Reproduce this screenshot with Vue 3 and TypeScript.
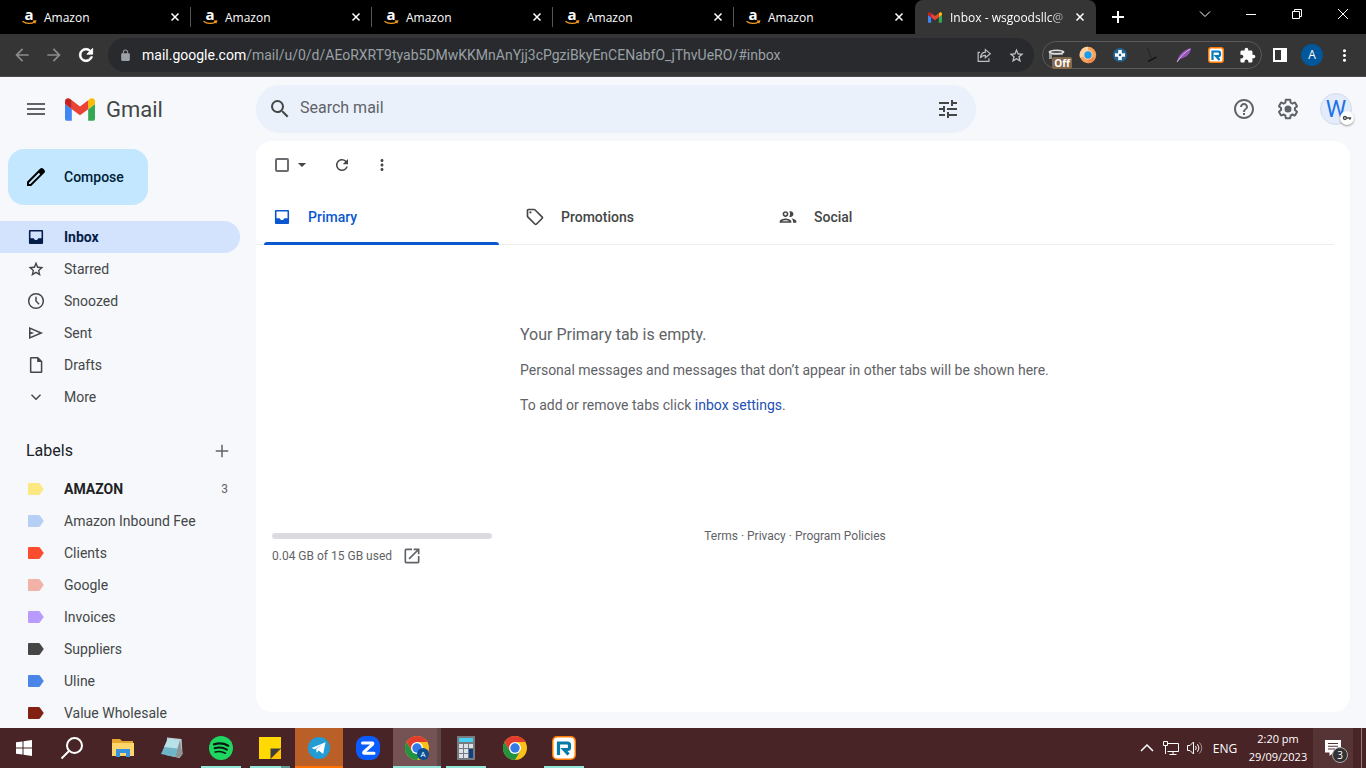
<script setup lang="ts">
import { ref } from 'vue'

interface NavItem { name: string; icon: string }
interface Label { name: string; color: string; count?: number }

const icons: Record<string, string> = {
  menu: 'M3 18h18v-2H3v2zm0-5h18v-2H3v2zm0-7v2h18V6H3z',
  search: 'M15.5 14h-.79l-.28-.27A6.471 6.471 0 0 0 16 9.5 6.5 6.5 0 1 0 9.5 16c1.61 0 3.09-.59 4.23-1.57l.27.28v.79l5 4.99L20.49 19l-4.99-5zm-6 0C7.01 14 5 11.99 5 9.5S7.01 5 9.5 5 14 7.01 14 9.5 11.99 14 9.5 14z',
  tune: 'M3 17v2h6v-2H3zM3 5v2h10V5H3zm10 16v-2h8v-2h-8v-2h-2v6h2zM7 9v2H3v2h4v2h2V9H7zm14 4v-2H11v2h10zm-6-4h2V7h4V5h-4V3h-2v6z',
  help: 'M11 18h2v-2h-2v2zm1-16C6.48 2 2 6.48 2 12s4.48 10 10 10 10-4.48 10-10S17.52 2 12 2zm0 18c-4.41 0-8-3.59-8-8s3.59-8 8-8 8 3.59 8 8-3.59 8-8 8zm0-14c-2.21 0-4 1.79-4 4h2c0-1.1.9-2 2-2s2 .9 2 2c0 2-3 1.75-3 5h2c0-2.25 3-2.5 3-5 0-2.21-1.79-4-4-4z',
  settings: 'M13.85 22.25h-3.7c-.74 0-1.36-.54-1.45-1.27l-.27-1.89c-.27-.14-.53-.29-.79-.46l-1.8.72c-.7.26-1.47-.03-1.81-.65L2.2 15.53c-.35-.66-.2-1.44.36-1.88l1.53-1.19c-.01-.15-.02-.3-.02-.46 0-.15.01-.31.02-.46l-1.52-1.19c-.59-.45-.74-1.26-.37-1.88l1.85-3.19c.34-.62 1.11-.9 1.79-.63l1.81.73c.26-.17.52-.32.78-.46l.27-1.91c.09-.7.71-1.25 1.44-1.25h3.7c.74 0 1.36.54 1.45 1.27l.27 1.89c.27.14.53.29.79.46l1.8-.72c.71-.26 1.48.03 1.82.65l1.84 3.18c.36.66.2 1.44-.36 1.88l-1.52 1.19c.01.15.02.3.02.46s-.01.31-.02.46l1.52 1.19c.56.45.72 1.23.37 1.86l-1.86 3.22c-.34.62-1.11.9-1.8.63l-1.8-.72c-.26.17-.52.32-.78.46l-.27 1.91c-.1.68-.72 1.22-1.46 1.22zm-3.23-2h2.76l.37-2.55.53-.22c.44-.18.88-.44 1.34-.78l.45-.34 2.38.96 1.38-2.4-2.03-1.58.07-.56c.03-.26.06-.51.06-.78s-.03-.53-.06-.78l-.07-.56 2.03-1.58-1.39-2.4-2.39.96-.45-.35c-.42-.32-.87-.58-1.33-.77l-.52-.22-.37-2.55h-2.76l-.37 2.55-.53.21c-.44.19-.88.44-1.34.79l-.45.33-2.38-.95-1.39 2.39 2.03 1.58-.07.56a7 7 0 0 0-.06.79c0 .26.02.53.06.78l.07.56-2.03 1.58 1.38 2.4 2.39-.96.45.35c.43.33.86.58 1.33.77l.53.22.38 2.55zM12 8.5a3.5 3.5 0 1 0 0 7 3.5 3.5 0 0 0 0-7z',
  pencil: 'M20.41 4.94l-1.35-1.35c-.78-.78-2.05-.78-2.83 0L3 16.82V21h4.18L20.41 7.77c.79-.78.79-2.05 0-2.83zm-14 14.12L5 19v-1.36l9.82-9.82 1.41 1.41-9.82 9.83z',
  inbox: 'M5 3.6h14c.9 0 1.5.6 1.5 1.5v13.9c0 .9-.6 1.5-1.5 1.5H5c-.9 0-1.5-.6-1.5-1.5V5.1c0-.9.6-1.5 1.5-1.5zM5.4 5.5v8h3.9c.3 1.400 1.300 2.100 2.700 2.100s2.400-.7 2.700-2.100h3.900v-8z',
  star: 'M21 9.7l-6.5-.6L12 3.1 9.5 9.1 3 9.7l4.9 4.3-1.5 6.4L12 17l5.6 3.4-1.5-6.4L21 9.7zM12 15l-3.100 1.900.8-3.500-2.700-2.400 3.600-.3L12 7.400l1.400 3.300 3.600.3-2.700 2.400.8 3.500z',
  clock: 'M12 2.3a9.7 9.7 0 1 0 0 19.4 9.7 9.7 0 0 0 0-19.4zm0 17.6a7.900 7.900 0 1 1 0-15.800 7.900 7.900 0 0 1 0 15.800zM12.9 6.8h-1.8v5.6l4 4 1.2-1.2-3.4-3.5z',
  send: 'M3.6 4.8v14.4L20.6 12 3.6 4.8zm1.8 2.7L15.9 12 5.4 16.500V13.400L10 12l-4.600-1.400V7.500z',
  draft: 'M6.400 2.400h8.100l5.100 5.100v12.500c0 1-.7 1.700-1.700 1.700H6.400c-1 0-1.700-.7-1.700-1.700V4.100c0-1 .7-1.700 1.700-1.700zm.1 1.800v15.700h11.300V8.400h-4.400V4.200z',
  more: 'M7.200 8.700L12 13.500l4.800-4.800 1.200 1.200-6 6-6-6z',
  plus: 'M19.500 11.100h-6.600V4.500h-1.800v6.600H4.500v1.800h6.600v6.600h1.800v-6.600h6.600z',
  label: 'M4 4.800h11.200c.7 0 1.200.3 1.600.8l4.500 6.400-4.500 6.400c-.4.500-.9.800-1.600.8H4c-1 0-1.600-.6-1.600-1.600V6.400c0-1 .6-1.600 1.600-1.600z',
  tag: 'M21.41 11.41l-8.83-8.83c-.37-.37-.88-.58-1.41-.58H4c-1.100 0-2 .9-2 2v7.170c0 .53.21 1.040.59 1.410l8.830 8.830c.78.78 2.050.78 2.830 0l7.170-7.170c.78-.78.78-2.040-.01-2.830zM12.830 20L4 11.170V4h7.170L20 12.830 12.830 20zM6.500 5.200a1.300 1.300 0 1 0 0 2.600 1.300 1.300 0 0 0 0-2.600z',
  people: 'M9 13.75c-2.34 0-7 1.17-7 3.5V19h14v-1.75c0-2.33-4.66-3.5-7-3.5zM4.34 17c.84-.58 2.87-1.25 4.66-1.25s3.82.67 4.66 1.25H4.34zM9 12c1.93 0 3.5-1.57 3.5-3.5S10.93 5 9 5 5.5 6.57 5.5 8.5 7.07 12 9 12zm0-5c.83 0 1.5.67 1.5 1.5S9.83 10 9 10s-1.5-.67-1.5-1.5S8.17 7 9 7zm7.04 6.81c1.16.84 1.96 1.96 1.96 3.44V19h4v-1.75c0-2.02-3.5-3.17-5.96-3.44zM15 12c1.93 0 3.5-1.57 3.5-3.5S16.93 5 15 5c-.54 0-1.04.13-1.5.35.63.89 1 1.98 1 3.15s-.37 2.26-1 3.15c.46.22.96.35 1.5.35z',
  refresh: 'M17.65 6.35A7.958 7.958 0 0 0 12 4c-4.42 0-7.99 3.58-7.99 8s3.57 8 7.99 8c3.73 0 6.84-2.55 7.73-6h-2.08A5.99 5.99 0 0 1 12 18c-3.31 0-6-2.69-6-6s2.69-6 6-6c1.66 0 3.14.69 4.22 1.78L13 11h7V4l-2.35 2.35z',
  dots: 'M12 8c1.1 0 2-.9 2-2s-.9-2-2-2-2 .9-2 2 .9 2 2 2zm0 2c-1.1 0-2 .9-2 2s.9 2 2 2 2-.9 2-2-.9-2-2-2zm0 6c-1.1 0-2 .9-2 2s.9 2 2 2 2-.9 2-2-.9-2-2-2z',
  caret: 'M7 9.500l5 5 5-5z',
  back: 'M20 11H7.83l5.59-5.59L12 4l-8 8 8 8 1.41-1.41L7.83 13H20v-2z',
  forward: 'M4 11h12.170l-5.590-5.590L12 4l8 8-8 8-1.410-1.410L16.170 13H4v-2z',
  lock: 'M18 8h-1V6c0-2.76-2.24-5-5-5S7 3.24 7 6v2H6c-1.1 0-2 .9-2 2v10c0 1.1.9 2 2 2h12c1.1 0 2-.9 2-2V10c0-1.1-.9-2-2-2zM15.1 8H8.9V6a3.1 3.1 0 0 1 6.2 0v2z',
  puzzle: 'M20.5 11H19V7c0-1.1-.9-2-2-2h-4V3.5C13 2.12 11.88 1 10.5 1S8 2.12 8 3.5V5H4c-1.1 0-1.99.9-1.99 2v3.8H3.5c1.49 0 2.7 1.21 2.7 2.7s-1.21 2.7-2.7 2.7H2V20c0 1.1.9 2 2 2h3.8v-1.5c0-1.49 1.21-2.7 2.7-2.7 1.49 0 2.7 1.21 2.7 2.7V22H17c1.1 0 2-.9 2-2v-4h1.5c1.38 0 2.5-1.12 2.5-2.5S21.88 11 20.5 11z',
  launch: 'M19 19H5V5h7V3H5a2 2 0 0 0-2 2v14a2 2 0 0 0 2 2h14c1.1 0 2-.9 2-2v-7h-2v7zM14 3v2h3.59l-9.83 9.83 1.41 1.41L19 6.41V10h2V3h-7z',
}

const folders: NavItem[] = [
  { name: 'Inbox', icon: 'inbox' },
  { name: 'Starred', icon: 'star' },
  { name: 'Snoozed', icon: 'clock' },
  { name: 'Sent', icon: 'send' },
  { name: 'Drafts', icon: 'draft' },
  { name: 'More', icon: 'more' },
]

const labels: Label[] = [
  { name: 'AMAZON', color: '#fce883', count: 3 },
  { name: 'Amazon Inbound Fee', color: '#b6cff5' },
  { name: 'Clients', color: '#fb4c2f' },
  { name: 'Google', color: '#f2b2a8' },
  { name: 'Invoices', color: '#b99aff' },
  { name: 'Suppliers', color: '#464646' },
  { name: 'Uline', color: '#4986e7' },
  { name: 'Value Wholesale', color: '#822111' },
]

const categories: NavItem[] = [
  { name: 'Primary', icon: 'inbox' },
  { name: 'Promotions', icon: 'tag' },
  { name: 'Social', icon: 'people' },
]

const apps = [
  { id: 'explorer', title: 'File Explorer', state: '' },
  { id: 'notepad', title: 'Notepad', state: '' },
  { id: 'spotify', title: 'Spotify', state: 'open' },
  { id: 'sticky', title: 'Sticky Notes', state: 'open stacked' },
  { id: 'telegram', title: 'Telegram', state: 'alert' },
  { id: 'zoom', title: 'Zoom', state: '' },
  { id: 'chromeA', title: 'Google Chrome', state: 'current' },
  { id: 'calc', title: 'Calculator', state: 'open' },
  { id: 'chrome', title: 'Google Chrome', state: '' },
  { id: 'ring', title: 'RingCentral', state: 'open' },
]

const folder = ref('Inbox')
const category = ref('Primary')
const query = ref('')
</script>

<template>
  <div class="screen">
    <header class="browser">
      <div class="strip">
        <div v-for="n in 5" :key="n" class="tab">
          <svg class="favicon" viewBox="0 0 16 16" aria-hidden="true">
            <text x="8" y="11" text-anchor="middle" font-family="Open Sans" font-weight="700" font-size="15" fill="#fff">a</text>
            <path d="M1.500 12.300c3.600 2.700 8.800 2.800 12.200.7M12 12.200l2.600-.2-.8 2.300" fill="none" stroke="#f39a1e" stroke-width="1.300" />
          </svg>
          <span class="tab-title">Amazon</span>
          <button class="close" aria-label="Close tab"><svg viewBox="0 0 8 8"><path d="M.5.5l7 7m0-7l-7 7" /></svg></button>
        </div>
        <div class="tab active">
          <svg class="favicon gm" viewBox="52 42 88 66" aria-hidden="true">
            <path fill="#4285f4" d="M58 108h14V74L52 59v43c0 3.320 2.690 6 6 6" /><path fill="#34a853" d="M120 108h14c3.320 0 6-2.690 6-6V59l-20 15" /><path fill="#fbbc04" d="M120 48v26l20-15v-8c0-7.420-8.470-11.650-14.400-7.200" /><path fill="#ea4335" d="M72 74V48l24 18 24-18v26L96 92" /><path fill="#c5221f" d="M52 51v8l20 15V48l-5.600-4.200c-5.940-4.450-14.400-.22-14.400 7.200" />
          </svg>
          <span class="tab-title fade">Inbox - wsgoodsllc@</span>
          <button class="close" aria-label="Close tab"><svg viewBox="0 0 8 8"><path d="M.5.5l7 7m0-7l-7 7" /></svg></button>
        </div>
        <button class="new-tab" aria-label="New tab"><svg viewBox="0 0 12 12"><path d="M6 0v12M0 6h12" /></svg></button>
        <div class="window-buttons">
          <button aria-label="Search tabs"><svg viewBox="0 0 12 12"><path d="M1 3.500l5 5 5-5" /></svg></button>
          <button aria-label="Minimize"><svg viewBox="0 0 12 12"><path d="M1 6.500h10" /></svg></button>
          <button aria-label="Restore"><svg viewBox="0 0 12 12"><path d="M1.500 3.500h7v7h-7zM3.500 3.500v-2h7v7h-2" /></svg></button>
          <button aria-label="Close"><svg viewBox="0 0 12 12"><path d="M1 1l10 10M11 1L1 11" /></svg></button>
        </div>
      </div>
      <div class="toolbar">
        <button class="tool dim" aria-label="Back"><svg viewBox="0 0 24 24"><path :d="icons.back" /></svg></button>
        <button class="tool dim" aria-label="Forward"><svg viewBox="0 0 24 24"><path :d="icons.forward" /></svg></button>
        <button class="tool" aria-label="Reload"><svg viewBox="0 0 24 24"><path :d="icons.refresh" stroke="#fff" /></svg></button>
        <div class="omnibox">
          <svg class="lock" viewBox="0 0 24 24" aria-hidden="true"><path :d="icons.lock" /></svg>
          <div class="url" role="textbox" aria-label="Address" tabindex="0"><span>mail.google.com</span>/mail/u/0/d/AEoRXRT9tyab5DMwKKMnAnYjj3cPgziBkyEnCENabfO_jThvUeRO/#inbox</div>
          <button class="tool omni" aria-label="Share"><svg class="line" viewBox="0 0 20 20"><path d="M5.500 7H3.500v10h12v-3.500M11.500 4l5.500 4.500-5.500 4.500v-2.600c-2.600 0-4.300.8-5.500 2.800.3-3.400 2-6 5.500-6.400z" /></svg></button>
          <button class="tool omni" aria-label="Bookmark"><svg class="big" viewBox="0 0 24 24"><path fill-rule="evenodd" :d="icons.star" /></svg></button>
        </div>
        <div class="extensions">
          <button class="tool" aria-label="Extension, off">
            <svg class="ext" viewBox="0 0 20 20"><path d="M2 6v8h3v-4h11V6z" fill="#9b9b9b" /><ellipse cx="9.500" cy="7" rx="8" ry="2.600" fill="#ddd" /><ellipse cx="9.500" cy="7" rx="5.500" ry="1" fill="#555" /></svg>
            <span class="off">Off</span>
          </button>
          <button class="tool" aria-label="Orange ring extension"><svg class="ext" viewBox="0 0 20 20"><circle cx="10" cy="10" r="8.200" fill="#f7a35c" /><path d="M10 1.800a8.200 8.200 0 0 0-8 11l4-1.300a4.500 4.500 0 0 1 4-6z" fill="#ffd0a0" /><path d="M10 18.200a8.200 8.200 0 0 0 7.500-5l-4-1.500-4 3z" fill="#f08a4a" /><circle cx="10" cy="10" r="4.700" fill="#fbd9b8" /><circle cx="10" cy="10" r="3.700" fill="#1c9be6" /></svg></button>
          <button class="tool" aria-label="Blue cross extension"><svg class="ext" viewBox="0 0 20 20"><circle cx="10" cy="10" r="7" fill="#226593" /><path d="M8.200 5h3.600v3.200H15v3.600h-3.200V15H8.200v-3.200H5V8.200h3.200z" fill="#fff" /><circle cx="10" cy="10" r="1.300" fill="#226593" /></svg></button>
          <button class="tool" aria-label="Clock extension"><svg class="ext" viewBox="0 0 20 20"><path d="M5.500 3l4 10.500" fill="none" stroke="#242424" /><path d="M6 16.500l8.500-4.500" fill="none" stroke="#0c0c0c" stroke-width="1.400" /></svg></button>
          <button class="tool" aria-label="Feather extension"><svg class="ext" viewBox="0 0 20 20"><path d="M3 17C4 10 9 5 17 3c0 5-4 9.500-11 11z" fill="#9253b5" /><path d="M3 17C7 11 11 7 16 4" fill="none" stroke="#dfbce9" /></svg></button>
          <button class="tool" aria-label="RingCentral extension"><svg class="ext" viewBox="0 0 20 20"><rect x="2" y="2" width="16" height="16" rx="3" fill="#ff7a00" /><rect x="3.500" y="3.500" width="13" height="13" rx="1.500" fill="#fff" /><path d="M6.500 15V6.500h6q1.500 0 1.500 1.500v1.500q0 1.500-1.500 1.500H10l3.500 4" fill="none" stroke="#067ab8" stroke-width="2.200" /></svg></button>
          <button class="tool" aria-label="Extensions"><svg class="puzzle" viewBox="0 0 24 24"><path :d="icons.puzzle" /></svg></button>
        </div>
        <div class="chrome-end">
          <button class="tool" aria-label="Side panel"><svg class="panel-icon" viewBox="0 0 14 14"><path fill-rule="evenodd" d="M0 0h14v14H0zM2 2v10h6V2z" /></svg></button>
          <button class="tool" aria-label="Profile"><span class="profile">A</span></button>
          <button class="tool" aria-label="Menu"><svg class="kebab" viewBox="0 0 24 24"><path :d="icons.dots" /></svg></button>
        </div>
      </div>
    </header>

    <div class="mail">
      <header class="mail-head">
        <div class="brand">
          <button class="plain" aria-label="Main menu"><svg class="i24" viewBox="0 0 24 24"><path :d="icons.menu" /></svg></button>
          <a class="logo" href="#inbox">
            <svg viewBox="52 42 88 66" aria-hidden="true">
              <path fill="#4285f4" d="M58 108h14V74L52 59v43c0 3.320 2.690 6 6 6" /><path fill="#34a853" d="M120 108h14c3.320 0 6-2.690 6-6V59l-20 15" /><path fill="#fbbc04" d="M120 48v26l20-15v-8c0-7.420-8.470-11.650-14.400-7.200" /><path fill="#ea4335" d="M72 74V48l24 18 24-18v26L96 92" /><path fill="#c5221f" d="M52 51v8l20 15V48l-5.600-4.200c-5.940-4.450-14.400-.22-14.400 7.200" />
            </svg>
            <span>Gmail</span>
          </a>
        </div>
        <form class="search" role="search" @submit.prevent>
          <button class="plain dark" aria-label="Search"><svg class="i24" viewBox="0 0 24 24"><path :d="icons.search" /></svg></button>
          <input v-model="query" type="text" placeholder="Search mail" aria-label="Search mail">
          <button class="plain dark" type="button" aria-label="Search options"><svg class="i24" viewBox="0 0 24 24"><path :d="icons.tune" /></svg></button>
        </form>
        <div class="account">
          <button class="plain" aria-label="Support"><svg class="i24" viewBox="0 0 24 24"><path :d="icons.help" /></svg></button>
          <button class="plain" aria-label="Settings"><svg class="i24" viewBox="0 0 24 24"><path fill-rule="evenodd" :d="icons.settings" /></svg></button>
          <button class="avatar" aria-label="Account">W
            <span class="key"><svg viewBox="0 0 12 12"><circle cx="3.500" cy="6" r="1.800" /><path d="M5.300 6h5.700M9.500 6v2" /></svg></span>
          </button>
        </div>
      </header>

      <div class="mail-body">
        <aside class="side">
          <button class="compose"><svg class="i24" viewBox="0 0 24 24"><path :d="icons.pencil" /></svg>Compose</button>
          <nav class="list" aria-label="Folders">
            <a v-for="f in folders" :key="f.name" href="#inbox" class="row" :class="{ selected: f.name === folder }" @click.prevent="folder = f.name">
              <svg class="i20" viewBox="0 0 24 24" aria-hidden="true"><path fill-rule="evenodd" :d="icons[f.icon]" /></svg>
              <span>{{ f.name }}</span>
            </a>
          </nav>
          <div class="labels-head">
            <h2>Labels</h2>
            <button class="plain" aria-label="Create new label"><svg class="i20" viewBox="0 0 24 24"><path :d="icons.plus" /></svg></button>
          </div>
          <nav class="list" aria-label="Labels">
            <a v-for="l in labels" :key="l.name" href="#label" class="row" :class="{ unread: l.count }">
              <svg class="i20" viewBox="0 0 24 24" aria-hidden="true"><path :d="icons.label" :fill="l.color" /></svg>
              <span>{{ l.name }}</span>
              <span v-if="l.count" class="count">{{ l.count }}</span>
            </a>
          </nav>
        </aside>

        <main class="panel">
          <div class="actions">
            <input type="checkbox" aria-label="Select all">
            <button class="plain caret" aria-label="Select options"><svg class="i20" viewBox="0 0 24 24"><path :d="icons.caret" /></svg></button>
            <button class="plain" aria-label="Refresh"><svg class="i18" viewBox="0 0 24 24"><path :d="icons.refresh" /></svg></button>
            <button class="plain" aria-label="More options"><svg class="i18" viewBox="0 0 24 24"><path :d="icons.dots" /></svg></button>
          </div>
          <div class="categories" role="tablist">
            <button v-for="c in categories" :key="c.name" role="tab" class="category" :class="{ on: c.name === category }" :aria-selected="c.name === category" @click="category = c.name">
              <svg class="i20" viewBox="0 0 24 24" aria-hidden="true"><path fill-rule="evenodd" :d="icons[c.icon]" /></svg>
              {{ c.name }}
            </button>
          </div>
          <section class="empty">
            <p class="lead">Your Primary tab is empty.</p>
            <p>Personal messages and messages that don’t appear in other tabs will be shown here.</p>
            <p>To add or remove tabs click <a href="#settings">inbox settings</a>.</p>
          </section>
          <footer class="foot">
            <div class="storage">
              <div class="meter"></div>
              <div class="used">0.04 GB of 15 GB used <a href="#storage" aria-label="Manage storage"><svg class="i20" viewBox="0 0 24 24"><path :d="icons.launch" /></svg></a></div>
            </div>
            <div class="legal"><a href="#terms">Terms</a> · <a href="#privacy">Privacy</a> · <a href="#policies">Program Policies</a></div>
          </footer>
        </main>
      </div>
    </div>

    <footer class="taskbar">
      <button class="task" aria-label="Start"><svg viewBox="0 0 24 24"><path fill="#fff" d="M4 6.300l6.500-.9v6.100H4zM11.500 5.200L20 4v7.500h-8.500zM4 12.500h6.500v6.100L4 17.700zM11.500 12.500H20V20l-8.500-1.200z" /></svg></button>
      <button class="task" aria-label="Search"><svg viewBox="0 0 24 24"><g fill="none" stroke="#fff" stroke-width="2"><circle cx="14.500" cy="9.500" r="7.500" /><path d="M9 15l-7.500 7.500" /></g></svg></button>
      <div class="apps">
        <button v-for="a in apps" :key="a.id" class="task" :class="a.state" :aria-label="a.title">
          <svg v-if="a.id === 'explorer'" viewBox="0 0 24 24"><path d="M1 3h8l2 2h11v3H1z" fill="#e8a62c" /><path d="M1 7h22v13H1z" fill="#ffd66b" /><path d="M5 13h14v8h-4v-4H9v4H5z" fill="#3593df" /></svg>
          <svg v-else-if="a.id === 'notepad'" viewBox="0 0 24 24"><path d="M7 1.500l14.500 1.500 1 15-3 4L6 19z" fill="#c9d2d4" /><path d="M8 2.500L20 4l-5 17L1 18z" fill="#6fb5c8" /><path d="M8 2.500L20 4l-2.500 8.500L4 11z" fill="#b9e1e8" /><path d="M20 4l2.500 14-3 3.500-4.500-.5z" fill="#8b9597" /></svg>
          <svg v-else-if="a.id === 'spotify'" viewBox="0 0 24 24"><circle cx="12" cy="12" r="12" fill="#1ed760" /><g fill="none" stroke="#0b1a10" stroke-linecap="round"><path d="M5 8.300c5-1.400 10-1 14.200 1.400" stroke-width="2.300" /><path d="M5.600 12.300c4.200-1.200 8.500-.8 12.300 1.300" stroke-width="2" /><path d="M6.200 16c3.500-.9 7-.6 10.200 1.200" stroke-width="1.700" /></g></svg>
          <svg v-else-if="a.id === 'sticky'" viewBox="0 0 24 24"><path d="M1 1h22v11L12.500 23H1z" fill="#ffd900" /><path d="M12.500 12.500H23V23H12.500z" fill="#3e3e3e" /><path d="M23 12.500V23H12.500z" fill="#ffc400" /></svg>
          <svg v-else-if="a.id === 'telegram'" viewBox="0 0 24 24"><circle cx="12" cy="12" r="11" fill="#239bd4" /><path d="M4.500 12L18.500 6.300 16.200 18l-4.500-3.400-2.200 2.200-.3-3.800L16 8l-8.300 5.200z" fill="#fff" /></svg>
          <svg v-else-if="a.id === 'zoom'" viewBox="0 0 24 24"><rect width="24" height="24" rx="9" fill="#0b5cff" /><path d="M6.500 7h9.500q1.500 0 .5 1.300l-8.500 7.600q-1 1.300.5 1.300H18" fill="none" stroke="#fff" stroke-width="3" stroke-linejoin="round" stroke-linecap="round" /></svg>
          <svg v-else-if="a.id === 'calc'" viewBox="0 0 24 24"><path d="M3 0h18v24H3z" fill="#777b80" /><path d="M5 2h14v4H5z" fill="#48d0f4" /><path d="M5 8h4v4H5zm5 0h4v4h-4zm5 0h4v4h-4zM5 13h4v4H5zm5 0h4v4h-4zM5 18h4v4H5zm5 0h4v4h-4z" fill="#dbe3e9" /><path d="M15 13h4v9h-4z" fill="#103f83" /></svg>
          <svg v-else-if="a.id === 'ring'" viewBox="0 0 24 24"><rect width="24" height="24" rx="5" fill="#ff7a00" /><rect x="1.500" y="1.500" width="21" height="21" rx="4" fill="#fff" /><path d="M6.500 19V7h9q2 0 2 2v2.500q0 2-2 2H12l4.500 5" fill="none" stroke="#067aa8" stroke-width="3.200" /></svg>
          <svg v-else viewBox="0 0 24 24"><circle cx="12" cy="12" r="12" fill="#fbc116" /><path d="M1.600 6A12 12 0 0 0 12 24l5.200-9L12 12l-5.200 3z" fill="#229342" /><path d="M1.600 6l5.200 9L12 6h10.400A12 12 0 0 0 1.600 6z" fill="#e33b2e" /><circle cx="12" cy="12" r="6" fill="#fff" /><circle cx="12" cy="12" r="4.700" fill="#3479e8" /><g v-if="a.id === 'chromeA'"><circle cx="18" cy="18" r="6" fill="#0b4f92" /><text x="18" y="21" text-anchor="middle" font-size="8" font-family="Open Sans" fill="#fff">A</text></g></svg>
        </button>
      </div>
      <div class="tray">
        <button class="tray-icon" aria-label="Show hidden icons"><svg viewBox="0 0 16 16"><path d="M2 11l6-6 6 6" stroke-width="1.500" /></svg></button>
        <button class="tray-icon" aria-label="Network"><svg viewBox="0 0 16 16"><path d="M4.500 3.500h11v8h-11M10 11.500v3M6.500 14.500h7M.5 1.500h4v4h-4zM2.500 5.500v8.500" /></svg></button>
        <button class="tray-icon" aria-label="Volume"><svg viewBox="0 0 16 16"><path d="M.5 5.500H3l3.500-3.500v12L3 10.500H.5zM8.500 6q1.500 2 0 4M10.500 4.200q3 3.800 0 7.600" /><path d="M12.500 2.500q4.500 5.500 0 11" opacity=".5" /></svg></button>
        <button class="lang">ENG</button>
        <button class="time"><span>2:20 pm</span><span>29/09/2023</span></button>
        <button class="notices" aria-label="3 notifications">
          <svg viewBox="0 0 16 16"><path fill="#fff" fill-rule="evenodd" d="M0 0h16v12.500H8.500L4.500 16v-3.500H0zM3 3v1h10V3zm0 2.800v1h10v-1zm0 2.800v1h7v-1z" /></svg>
          <span>3</span>
        </button>
        <button class="desktop" aria-label="Show desktop"></button>
      </div>
    </footer>
  </div>
</template>

<style>
body { margin: 0; }
</style>

<style scoped>
.screen { display: flex; flex-direction: column; height: 100vh; overflow: hidden; font-family: Roboto, "Liberation Sans", sans-serif; font-size: 14px; color: #444746; }
.screen * { box-sizing: border-box; }
button { border: 0; padding: 0; margin: 0; background: none; font: inherit; color: inherit; display: flex; align-items: center; justify-content: center; flex: none; }
a { color: inherit; text-decoration: none; }
svg { display: block; fill: currentColor; flex: none; overflow: visible; }
p, h2 { margin: 0; }

.browser, .taskbar { font-family: "Open Sans", "Noto Sans", sans-serif; color: #fff; flex: none; }
.strip { display: flex; background: #000; height: 34px; padding-left: 10px; }
.tab { display: flex; align-items: center; flex: 0 1 181px; min-width: 0; padding: 0 10px 0 11px; font-size: 12px; position: relative; }
.tab::after { content: ""; position: absolute; right: 0; top: 7px; height: 20px; width: 1px; background: #555; }
.tab:nth-child(5)::after, .tab.active::after { display: none; }
.tab.active { background: #353535; border-radius: 8px 8px 0 0; }
.favicon { width: 16px; height: 16px; margin-right: 7px; }
.favicon.gm { width: 14px; height: 11px; margin: 0 8px 0 2px; }
.tab-title { flex: 1; min-width: 0; white-space: nowrap; }
.fade { mask-image: linear-gradient(90deg, #000 85%, #0004); }
.close { width: 12px; height: 16px; margin-left: 8px; }
.close svg { width: 8px; height: 8px; stroke: #fff; stroke-width: 1.5; fill: none; }
.new-tab { width: 44px; }
.new-tab svg { width: 12px; height: 12px; stroke: #fff; stroke-width: 2; }
.window-buttons { display: flex; margin-left: auto; height: 28px; }
.window-buttons button { width: 46px; }
.window-buttons svg { width: 12px; height: 12px; fill: none; stroke: #fff; stroke-width: 1; }
.toolbar { display: flex; align-items: center; height: 43px; padding: 0 6px; background: #353535; border-bottom: 1px solid #4a4a4a; }
.tool { width: 32px; height: 28px; position: relative; }
.tool svg { width: 20px; height: 20px; }
.dim { color: #8c8c8c; }
.omnibox { display: flex; align-items: center; flex: 1; min-width: 0; height: 34px; margin: 0 8px 0 6px; padding: 0 2px 0 11px; border-radius: 17px; background: #282a2d; color: #9aa0a6; }
.lock { width: 13px; height: 13px; margin-right: 10px; }
.url { flex: 1; min-width: 0; overflow: hidden; white-space: nowrap; font-family: Roboto, "Noto Sans", sans-serif; font-size: 14px; line-height: 20px; }
.url span { color: #fff; }
.omni { color: #bdc1c6; }
.tool .line { width: 18px; height: 18px; fill: none; stroke: currentColor; stroke-width: 1.3; }
.tool .big { width: 19px; height: 19px; }
.extensions { display: flex; height: 28px; width: 220px; align-items: center; justify-content: center; border: 1px solid #5a5a5a; border-radius: 14px; }
.extensions .tool:first-child, .extensions .tool:last-child { width: 30px; }
.off { position: absolute; right: 0; bottom: 0; padding: 0 2px; background: #856849; border-radius: 2px; font-size: 10px; line-height: 12px; font-weight: 700; }
.tool .puzzle { width: 17px; height: 17px; }
.chrome-end { display: flex; margin-left: 2px; }
.tool .panel-icon { width: 14px; height: 14px; }
.profile { width: 22px; height: 22px; border-radius: 50%; background: #01579b; font-size: 12px; line-height: 22px; text-align: center; }
.tool .kebab { width: 19px; height: 19px; }

.mail { flex: 1; min-height: 0; display: flex; flex-direction: column; background: #f6f8fc; }
.i24 { width: 24px; height: 24px; }
.i20 { width: 20px; height: 20px; }
.i18 { width: 18px; height: 18px; }
.plain { color: #5f6368; }
.dark { color: #444746; }
.mail-head { display: flex; align-items: center; height: 64px; flex: none; }
.brand { display: flex; align-items: center; width: 256px; flex: none; padding-left: 24px; gap: 17px; }
.logo { display: flex; align-items: center; gap: 11px; font-size: 22px; line-height: 28px; color: #444746; }
.logo span { padding-top: 2px; }
.logo svg { width: 30px; height: 23px; }
.search { display: flex; align-items: center; flex: 0 1 720px; height: 48px; padding: 0 16px 0 12px; border-radius: 24px; background: #eaf1fb; }
.search input { flex: 1; min-width: 0; border: 0; outline: 0; padding: 0 8px 2px; background: none; font: 16px/24px Roboto, sans-serif; color: #444746; }
.search input::placeholder { color: #5f6368; opacity: 1; }
.account { display: flex; align-items: center; gap: 20px; margin-left: auto; padding-right: 14px; }
.avatar { width: 32px; height: 32px; border: 1px solid #d3dcec; border-radius: 50%; background: #e4ecfb; color: #1a73e8; font-size: 23px; position: relative; }
.key { position: absolute; right: -3px; bottom: -1px; width: 14px; height: 14px; border-radius: 50%; background: #fff; box-shadow: 0 1px 2px #0006; display: flex; align-items: center; justify-content: center; }
.key svg { width: 10px; height: 10px; fill: none; stroke: #444746; stroke-width: 1.6; }

.mail-body { display: flex; flex: 1; min-height: 0; }
.side { width: 256px; flex: none; padding-top: 8px; overflow: hidden; }
.compose { height: 56px; margin: 0 8px 16px; padding: 0 24px 0 16px; gap: 16px; border-radius: 16px; background: #c2e7ff; color: #001d35; font-weight: 500; }
.compose svg { color: #000; }
.list { padding-right: 16px; }
.row { display: flex; align-items: center; height: 32px; padding: 0 12px 0 26px; gap: 18px; border-radius: 0 16px 16px 0; color: #444746; }
.selected { background: #d3e3fd; color: #041e49; font-weight: 700; }
.unread { font-weight: 700; color: #202124; }
.count { margin-left: auto; font-size: 12px; font-weight: 400; color: #5f6368; }
.labels-head { display: flex; align-items: center; justify-content: space-between; height: 44px; margin: 16px 24px 0 26px; }
.labels-head h2 { font-size: 16px; font-weight: 400; color: #202124; padding-bottom: 2px; }

.panel { flex: 1; min-width: 0; margin: 0 16px 16px 0; padding-right: 16px; border-radius: 16px; background: #fff; overflow: hidden; }
.actions { display: flex; align-items: center; height: 48px; padding-left: 19px; }
.actions input { appearance: none; width: 14px; height: 14px; margin: 0; border: 2px solid #6a6d6f; border-radius: 2px; }
.actions .plain { width: 40px; color: #444746; }
.actions .caret { width: 26px; margin-right: 7px; }
.categories { display: flex; height: 56px; border-bottom: 1px solid #eceff1; }
.category { justify-content: flex-start; width: 253px; height: 56px; padding-left: 16px; gap: 16px; font-weight: 500; position: relative; }
.on { color: #0b57d0; }
.on::after { content: ""; position: absolute; left: 8px; right: 10px; bottom: 0; height: 3px; border-radius: 3px 3px 0 0; background: #0b57d0; }
.empty { width: 550px; max-width: 100%; margin: 80px auto 0; color: #5f6368; }
.empty p { line-height: 20px; margin-bottom: 15px; }
.empty .lead { font-size: 16px; }
.empty a { color: #2250b5; }
.foot { display: grid; grid-template-columns: 1fr 1fr 1fr; margin-top: 111px; font-size: 12px; line-height: 16px; color: #5f6368; }
.storage { padding: 7px 0 0 16px; }
.meter { width: 220px; height: 6px; border-radius: 3px; background: #dadce0; }
.used { display: flex; align-items: center; gap: 10px; margin-top: 7px; }
.legal { text-align: center; padding-top: 2px; }

.taskbar { display: flex; height: 40px; background: #482426; }
.task { width: 48px; height: 40px; position: relative; }
.task svg { width: 24px; height: 24px; }
.apps { display: flex; gap: 1px; margin-left: 3px; }
.open::after, .alert::after, .current::after { content: ""; position: absolute; left: 4px; right: 4px; bottom: 0; height: 2px; background: #92e6da; }
.stacked::after { background: linear-gradient(90deg, #92e6da 78%, #5f9a94 78%); }
.alert { background: #b86028; }
.alert::after { left: 0; right: 0; background: #ff7200; }
.current { background: linear-gradient(90deg, #755254 92%, #5d4748 92%); }
.current::after { left: 0; right: 0; }
.tray { display: flex; align-items: center; margin-left: auto; font-size: 12px; }
.tray-icon { width: 24px; height: 40px; }
.tray-icon svg { width: 16px; height: 16px; fill: none; stroke: #fff; stroke-width: 1; }
.lang { width: 36px; }
.time { flex-direction: column; width: 70px; line-height: 18px; font-size: 11px; white-space: nowrap; }
.notices { width: 40px; height: 40px; position: relative; background: #563335; }
.notices svg { width: 16px; height: 16px; }
.notices span { position: absolute; left: 19px; top: 19px; width: 16px; height: 16px; border: 1px solid #aaa; border-radius: 50%; background: #333; font-size: 10px; line-height: 14px; }
.desktop { width: 5px; height: 40px; margin-left: 8px; border-left: 1px solid #917c7d; }
</style>
